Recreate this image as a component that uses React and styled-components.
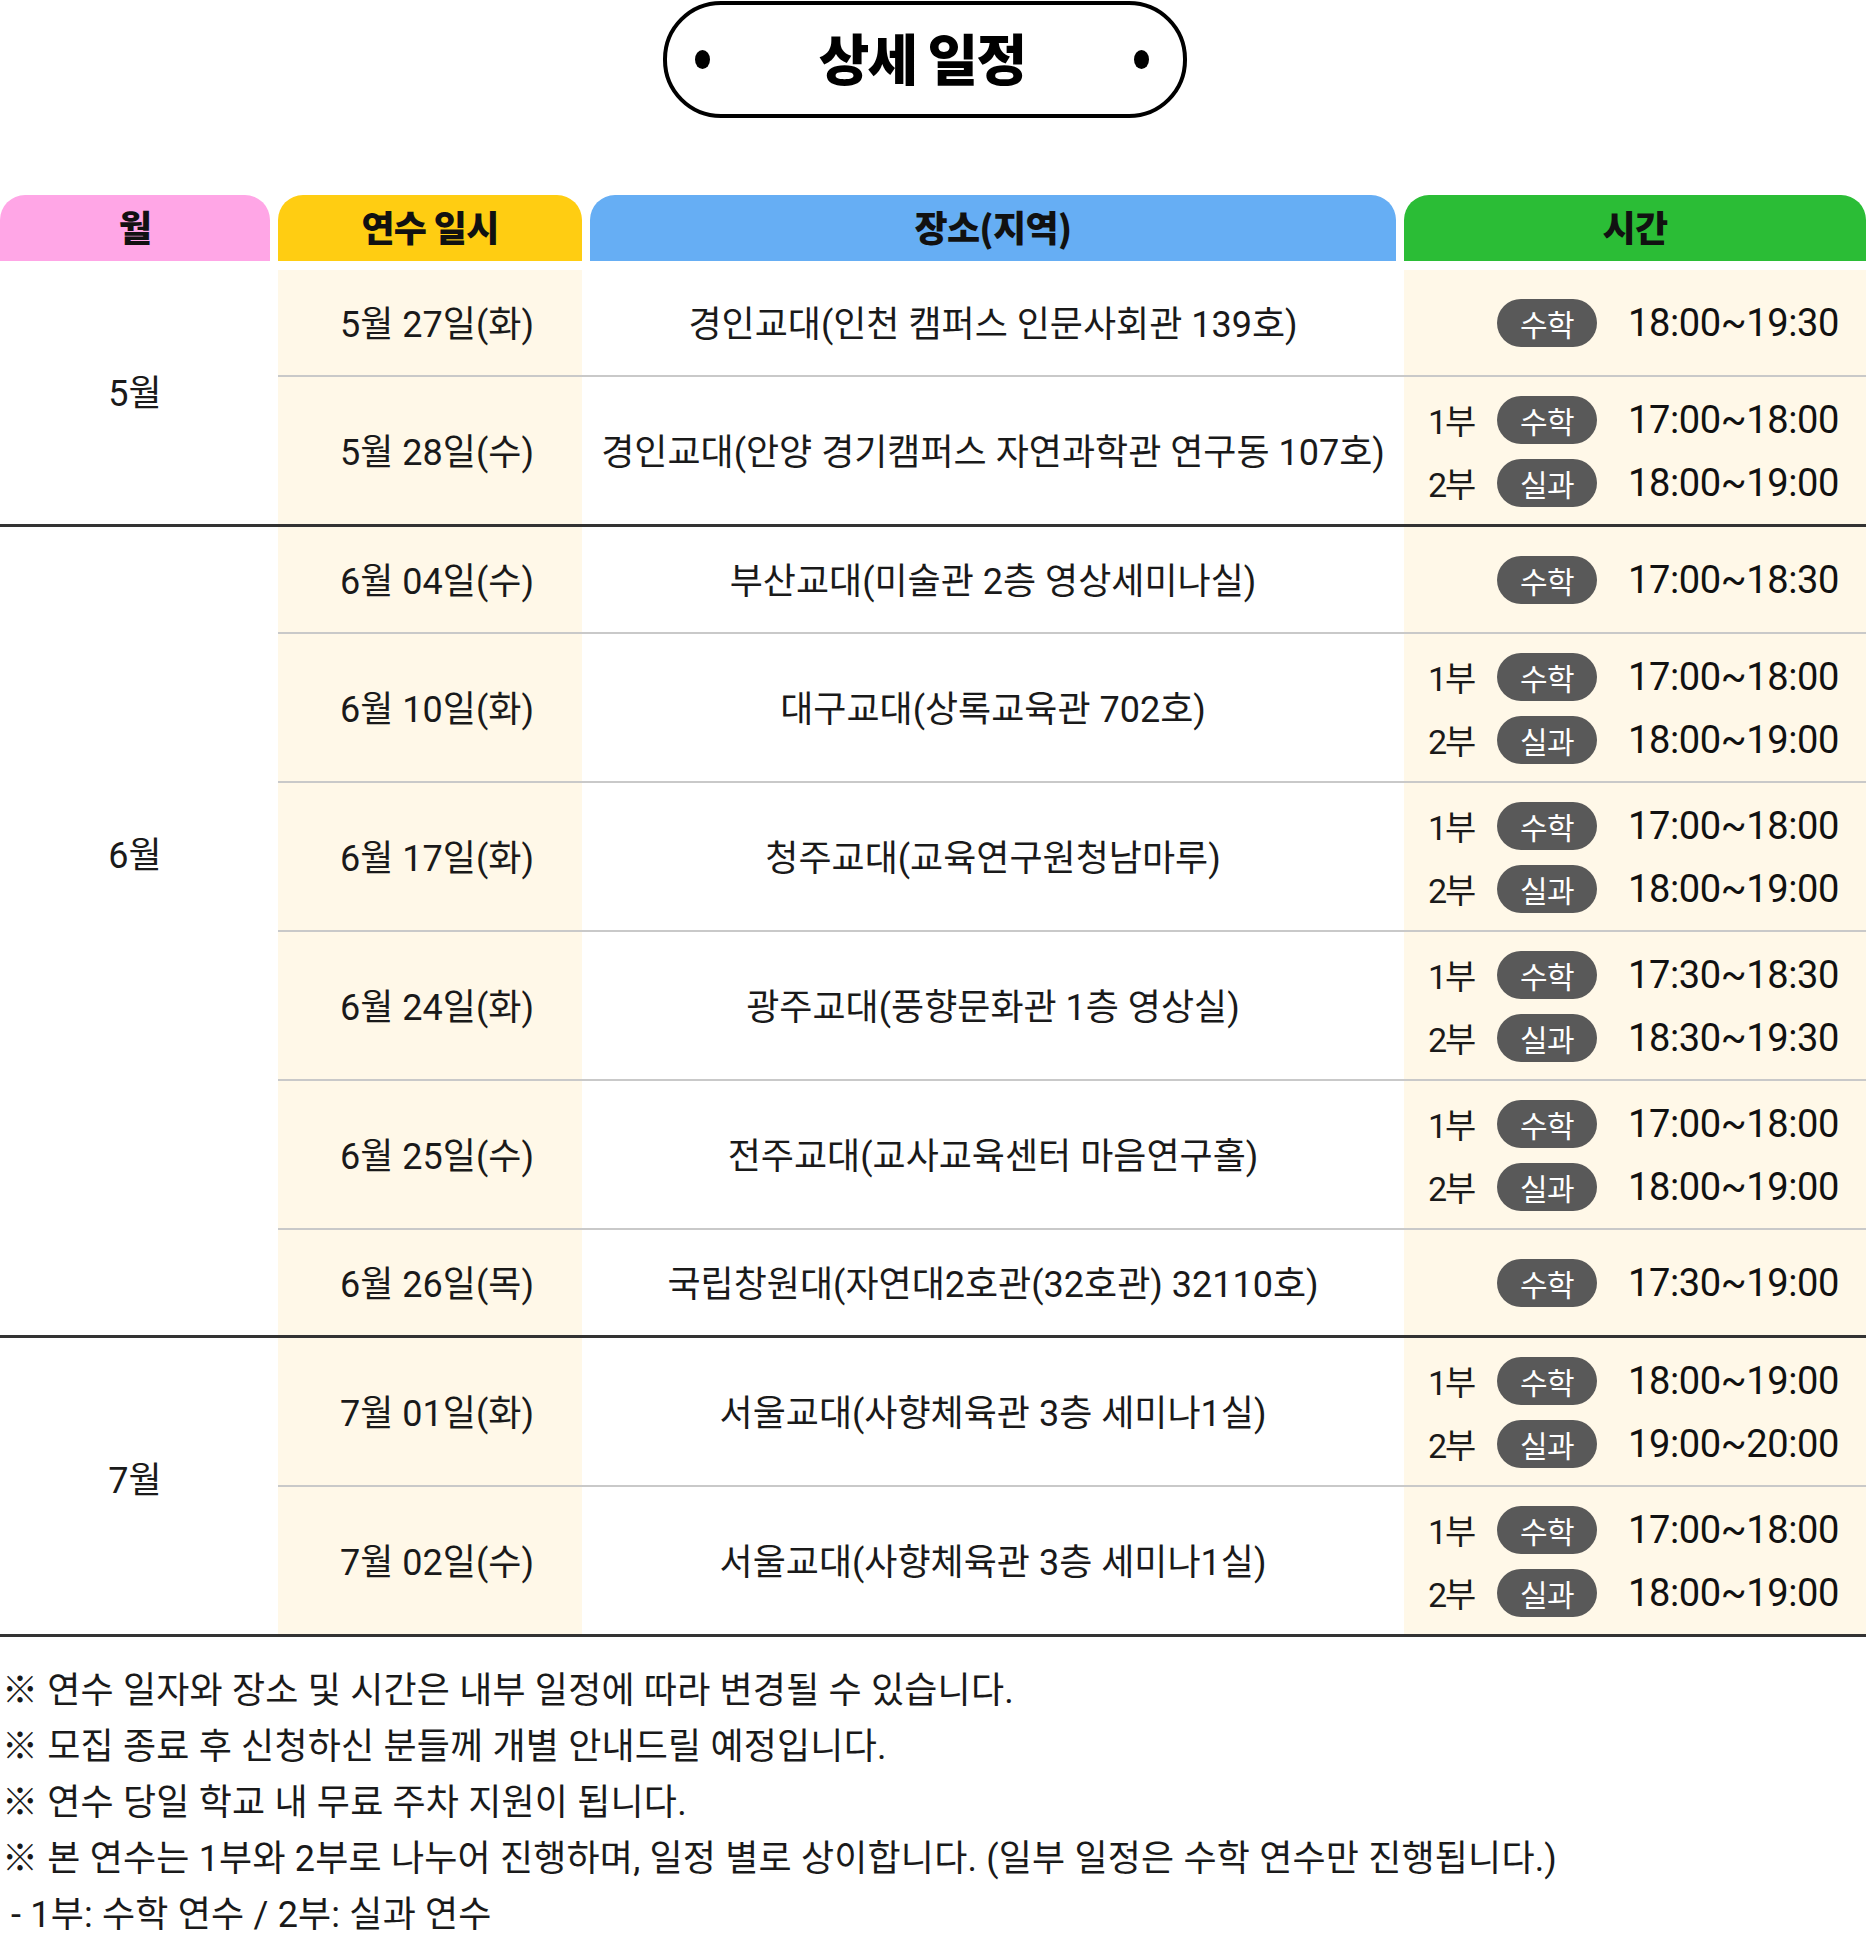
import React from "react";
import styled, { createGlobalStyle } from "styled-components";

const GlobalStyle = createGlobalStyle`
    * {
        box-sizing: border-box;
    }
    body {
        margin: 0;
        background: #ffffff;
        color: #1a1a1a;
        font-family: Roboto, "Noto Sans CJK KR", sans-serif;
    }
`;

const cream = "#fff8e8";

const schedule = [
    {
        month: "5월",
        lift: 15,
        rows: [
            {
                date: "5월 27일(화)",
                place: "경인교대(인천 캠퍼스 인문사회관 139호)",
                times: [{ badge: "수학", time: "18:00~19:30" }],
            },
            {
                date: "5월 28일(수)",
                place: "경인교대(안양 경기캠퍼스 자연과학관 연구동 107호)",
                times: [
                    { part: "1부", badge: "수학", time: "17:00~18:00" },
                    { part: "2부", badge: "실과", time: "18:00~19:00" },
                ],
            },
        ],
    },
    {
        month: "6월",
        lift: 158,
        rows: [
            {
                date: "6월 04일(수)",
                place: "부산교대(미술관 2층 영상세미나실)",
                times: [{ badge: "수학", time: "17:00~18:30" }],
            },
            {
                date: "6월 10일(화)",
                place: "대구교대(상록교육관 702호)",
                times: [
                    { part: "1부", badge: "수학", time: "17:00~18:00" },
                    { part: "2부", badge: "실과", time: "18:00~19:00" },
                ],
            },
            {
                date: "6월 17일(화)",
                place: "청주교대(교육연구원청남마루)",
                times: [
                    { part: "1부", badge: "수학", time: "17:00~18:00" },
                    { part: "2부", badge: "실과", time: "18:00~19:00" },
                ],
            },
            {
                date: "6월 24일(화)",
                place: "광주교대(풍향문화관 1층 영상실)",
                times: [
                    { part: "1부", badge: "수학", time: "17:30~18:30" },
                    { part: "2부", badge: "실과", time: "18:30~19:30" },
                ],
            },
            {
                date: "6월 25일(수)",
                place: "전주교대(교사교육센터 마음연구홀)",
                times: [
                    { part: "1부", badge: "수학", time: "17:00~18:00" },
                    { part: "2부", badge: "실과", time: "18:00~19:00" },
                ],
            },
            {
                date: "6월 26일(목)",
                place: "국립창원대(자연대2호관(32호관) 32110호)",
                times: [{ badge: "수학", time: "17:30~19:00" }],
            },
        ],
    },
    {
        month: "7월",
        lift: 18,
        rows: [
            {
                date: "7월 01일(화)",
                place: "서울교대(사향체육관 3층 세미나1실)",
                times: [
                    { part: "1부", badge: "수학", time: "18:00~19:00" },
                    { part: "2부", badge: "실과", time: "19:00~20:00" },
                ],
            },
            {
                date: "7월 02일(수)",
                place: "서울교대(사향체육관 3층 세미나1실)",
                times: [
                    { part: "1부", badge: "수학", time: "17:00~18:00" },
                    { part: "2부", badge: "실과", time: "18:00~19:00" },
                ],
            },
        ],
    },
];

const notes = [
    "※ 연수 일자와 장소 및 시간은 내부 일정에 따라 변경될 수 있습니다.",
    "※ 모집 종료 후 신청하신 분들께 개별 안내드릴 예정입니다.",
    "※ 연수 당일 학교 내 무료 주차 지원이 됩니다.",
    "※ 본 연수는 1부와 2부로 나누어 진행하며, 일정 별로 상이합니다. (일부 일정은 수학 연수만 진행됩니다.)",
    "\u00a0- 1부: 수학 연수 / 2부: 실과 연수",
];

const headers = [
    { label: "월", color: "#ffa6e6" },
    { label: "연수 일시", color: "#ffcd12" },
    { label: "장소(지역)", color: "#66aef4" },
    { label: "시간", color: "#2bbd36" },
];

function App() {
    return (
        <Page>
            <GlobalStyle />
            <TitleWrap>
                <TitlePill>
                    <Dot />
                    <Title>상세 일정</Title>
                    <Dot />
                </TitlePill>
            </TitleWrap>

            <HeaderRow>
                {headers.map((h) => (
                    <HeadCell key={h.label} $bg={h.color}>
                        {h.label}
                    </HeadCell>
                ))}
            </HeaderRow>

            <Body>
                {schedule.map((group) => (
                    <MonthGroup key={group.month}>
                        <MonthCell $lift={group.lift}>{group.month}</MonthCell>
                        <RowList>
                            {group.rows.map((row) => (
                                <Row
                                    key={row.date}
                                    $height={row.times.length > 1 ? 147 : 105}
                                >
                                    <DateCell>{row.date}</DateCell>
                                    <PlaceCell>{row.place}</PlaceCell>
                                    <TimeCell>
                                        {row.times.map((t) => (
                                            <TimeLine key={t.time}>
                                                <PartLabel>{t.part}</PartLabel>
                                                <Badge>{t.badge}</Badge>
                                                <TimeText>{t.time}</TimeText>
                                            </TimeLine>
                                        ))}
                                    </TimeCell>
                                </Row>
                            ))}
                        </RowList>
                    </MonthGroup>
                ))}
            </Body>

            <Notes>
                {notes.map((n) => (
                    <NoteLine key={n}>{n}</NoteLine>
                ))}
            </Notes>
        </Page>
    );
}

export default App;

const Page = styled.div`
    width: 1866px;
    padding-bottom: 20px;
`;

const TitleWrap = styled.div`
    display: flex;
    justify-content: center;
    padding: 1px 16px 0 0;
`;

const TitlePill = styled.div`
    width: 524px;
    height: 117px;
    border: 4px solid #000;
    border-radius: 58px;
    display: flex;
    align-items: center;
    justify-content: space-between;
    padding: 0 34px 0 28px;
`;

const Dot = styled.span`
    width: 15px;
    height: 19px;
    border-radius: 50%;
    background: #000;
`;

const Title = styled.h1`
    margin: 0;
    padding-bottom: 8px;
    font-family: "Noto Sans CJK KR", sans-serif;
    font-size: 55px;
    font-weight: 900;
    letter-spacing: -0.03em;
    color: #000;
`;

const HeaderRow = styled.div`
    margin-top: 77px;
    display: grid;
    grid-template-columns: 270px 304px 806px 462px;
    column-gap: 8px;
    height: 66px;
`;

const HeadCell = styled.div`
    background: ${(p) => p.$bg};
    border-radius: 25px 25px 0 0;
    display: flex;
    align-items: center;
    justify-content: center;
    padding-bottom: 4px;
    font-family: "Noto Sans CJK KR", sans-serif;
    font-size: 36px;
    font-weight: 900;
    letter-spacing: -0.02em;
    color: #111;
`;

const Body = styled.div`
    margin-top: 9px;
    border-bottom: 3px solid #333;
`;

const MonthGroup = styled.div`
    display: flex;
    & + & {
        border-top: 3px solid #333;
    }
`;

const MonthCell = styled.div`
    width: 278px;
    padding: 0 8px ${(p) => p.$lift}px 0;
    flex-shrink: 0;
    display: flex;
    align-items: center;
    justify-content: center;
    font-size: 36px;
`;

const RowList = styled.div`
    flex: 1;
    display: flex;
    flex-direction: column;
`;

const Row = styled.div`
    display: grid;
    grid-template-columns: 304px 806px 462px;
    grid-template-rows: ${(p) => p.$height}px;
    column-gap: 8px;
    & + & {
        border-top: 2px solid #c9c9c9;
    }
`;

const DateCell = styled.div`
    background: ${cream};
    display: flex;
    align-items: center;
    justify-content: center;
    padding: 0 0 4px 14px;
    font-size: 36px;
`;

const PlaceCell = styled.div`
    display: flex;
    align-items: center;
    justify-content: center;
    padding-bottom: 4px;
    font-size: 36px;
    white-space: nowrap;
`;

const TimeCell = styled.div`
    background: ${cream};
    display: flex;
    flex-direction: column;
    justify-content: center;
    gap: 15px;
    padding-left: 24px;
`;

const TimeLine = styled.div`
    display: grid;
    grid-template-columns: 44px 100px auto;
    column-gap: 25px;
    align-items: center;
    height: 48px;
`;

const PartLabel = styled.span`
    font-size: 34px;
    letter-spacing: -0.06em;
    white-space: nowrap;
`;

const Badge = styled.span`
    width: 100px;
    height: 48px;
    border-radius: 24px;
    background: #595959;
    color: #fff;
    display: flex;
    align-items: center;
    justify-content: center;
    font-size: 30px;
    letter-spacing: -0.02em;
`;

const TimeText = styled.span`
    margin-left: 6px;
    font-size: 38px;
    letter-spacing: -0.01em;
    color: #111;
`;

const Notes = styled.div`
    margin-top: 26px;
    padding-left: 2px;
`;

const NoteLine = styled.p`
    margin: 0;
    font-size: 36px;
    line-height: 56px;
    letter-spacing: 0.005em;
    white-space: nowrap;
`;
